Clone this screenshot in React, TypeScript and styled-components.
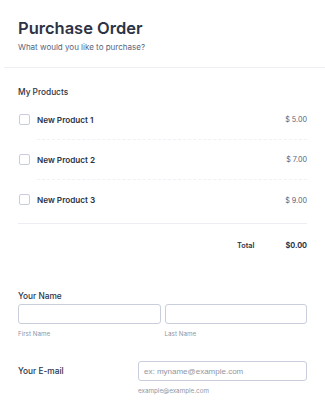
import React from "react";
import styled, { createGlobalStyle } from "styled-components";

const GlobalStyle = createGlobalStyle`
  html, body {
    margin: 0;
    padding: 0;
    background: #ffffff;
  }
  body {
    font-family: Inter, "Noto Sans", "Liberation Sans", sans-serif;
    color: #2c3345;
  }
  * { box-sizing: border-box; }
`;

const products = [
  { name: "New Product 1", price: "$ 5.00" },
  { name: "New Product 2", price: "$ 7.00" },
  { name: "New Product 3", price: "$ 9.00" },
];

export default function App() {
  return (
    <>
      <GlobalStyle />
      <Form>
        <Header>
          <Title>Purchase Order</Title>
          <Subtitle>What would you like to purchase?</Subtitle>
        </Header>

        <Section>
          <Label>My Products</Label>
          <ProductList>
            {products.map((p, i) => (
              <ProductRow key={p.name}>
                <Checkbox />
                <ProductInfo last={i === products.length - 1}>
                  <ProductName>{p.name}</ProductName>
                  <Price>{p.price}</Price>
                </ProductInfo>
              </ProductRow>
            ))}
          </ProductList>
          <TotalRow>
            <TotalLabel>Total</TotalLabel>
            <TotalValue>$0.00</TotalValue>
          </TotalRow>
        </Section>

        <NameField>
          <Label>Your Name</Label>
          <InputPair>
            <div>
              <TextInput />
              <SubLabel>First Name</SubLabel>
            </div>
            <div>
              <TextInput />
              <SubLabel>Last Name</SubLabel>
            </div>
          </InputPair>
        </NameField>

        <EmailField>
          <EmailLabel>Your E-mail</EmailLabel>
          <div>
            <TextInput placeholder="ex: myname@example.com" />
            <SubLabel>example@example.com</SubLabel>
          </div>
        </EmailField>
      </Form>
    </>
  );
}

const Form = styled.div`
  width: 325px;
  height: 400px;
  overflow: hidden;
  background: #fff;
`;

const Header = styled.div`
  margin-left: 4px;
  padding: 18px 14px 15px;
  border-bottom: 1px solid #eceef3;
`;

const Title = styled.h1`
  margin: 0;
  font-size: 16.5px;
  line-height: 20px;
  font-weight: 600;
  color: #2c3345;
`;

const Subtitle = styled.p`
  margin: 4px 0 0;
  font-size: 8px;
  line-height: 10px;
  color: #57647e;
`;

const Section = styled.div`
  padding: 18px 18px 0;
`;

const Label = styled.div`
  font-size: 8.3px;
  line-height: 12px;
  font-weight: 500;
  color: #2c3345;
`;

const ProductList = styled.div`
  margin-top: 2px;
  padding-bottom: 3px;
  border-bottom: 1px solid #eceef3;
`;

const ProductRow = styled.div`
  display: flex;
  align-items: stretch;
  gap: 7px;
  padding-left: 1px;
`;

const Checkbox = styled.span`
  flex: none;
  width: 11px;
  height: 11px;
  margin-top: 14px;
  border: 1px solid #c8cedb;
  border-radius: 2px;
  background: #fff;
`;

const ProductInfo = styled.div<{ last?: boolean }>`
  flex: 1;
  display: flex;
  align-items: center;
  justify-content: space-between;
  height: 40px;
  border-bottom: ${(p) => (p.last ? "none" : "1px dashed #f0f1f6")};
`;

const ProductName = styled.span`
  font-size: 8.2px;
  font-weight: 600;
  color: #2c3345;
`;

const Price = styled.span`
  font-size: 7.2px;
  color: #57647e;
`;

const TotalRow = styled.div`
  display: flex;
  justify-content: flex-end;
  gap: 31px;
  padding-top: 16px;
  font-size: 7.3px;
  line-height: 12px;
  font-weight: 600;
  color: #2c3345;
`;

const TotalLabel = styled.span``;

const TotalValue = styled.span`
  font-weight: 700;
`;

const NameField = styled.div`
  padding: 38px 18px 0;
`;

const InputPair = styled.div`
  display: grid;
  grid-template-columns: 1fr 1fr;
  gap: 4px;
  margin-top: 2px;
`;

const TextInput = styled.input`
  display: block;
  width: 100%;
  height: 20px;
  padding: 0 5px;
  border: 1px solid #c8cedb;
  border-radius: 3px;
  font-family: "Liberation Sans", Arial, sans-serif;
  font-size: 8px;
  color: #2c3345;
  outline: none;
  &::placeholder {
    color: #8f96a3;
  }
`;

const SubLabel = styled.div`
  margin-top: 6px;
  font-size: 6.3px;
  line-height: 9px;
  color: #8f96a3;
`;

const EmailField = styled.div`
  display: grid;
  grid-template-columns: 120px 1fr;
  padding: 22px 18px 0;
`;

const EmailLabel = styled.div`
  font-size: 8.3px;
  line-height: 20px;
  font-weight: 500;
  color: #2c3345;
`;
